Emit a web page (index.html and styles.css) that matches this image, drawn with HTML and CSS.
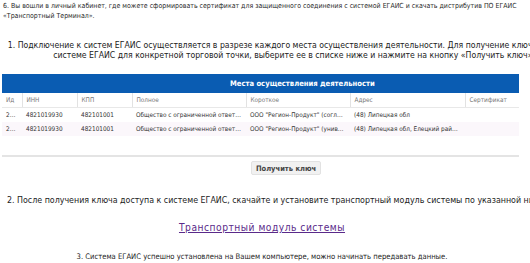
FILE: index.html
```html
<!doctype html>
<html lang="ru">
<head>
    <meta charset="UTF-8">
    <title>Подключение к ЕГАИС</title>
    <link rel="stylesheet" href="styles.css">
</head>
<body>
    <p class="intro">6. Вы вошли в личный кабинет, где можете сформировать сертификат для защищенного соединения с системой ЕГАИС и скачать дистрибутив ПО ЕГАИС «Транспортный Терминал».</p>

    <div class="wide">
        <p class="step step-one">1. Подключение к систем ЕГАИС осуществляется в разрезе каждого места осуществления деятельности. Для получение ключа доступа к<br>системе ЕГАИС для конкретной торговой точки, выберите ее в списке ниже и нажмите на кнопку «Получить ключ».</p>
    </div>

    <div class="grid">
        <div class="grid-title">Места осуществления деятельности</div>
        <table>
            <colgroup>
                <col class="c-id">
                <col class="c-inn">
                <col class="c-kpp">
                <col class="c-full">
                <col class="c-short">
                <col class="c-addr">
                <col>
            </colgroup>
            <thead>
                <tr>
                    <th>Ид</th>
                    <th>ИНН</th>
                    <th>КПП</th>
                    <th>Полное</th>
                    <th>Короткое</th>
                    <th>Адрес</th>
                    <th>Сертификат</th>
                </tr>
            </thead>
            <tbody>
                <tr>
                    <td>2143</td>
                    <td>4821019930</td>
                    <td>482101001</td>
                    <td>Общество с ограниченной ответственностью "Регион-Продукт"</td>
                    <td>ООО "Регион-Продукт" (согласие)</td>
                    <td>(48) Липецкая обл</td>
                    <td></td>
                </tr>
                <tr class="alt">
                    <td>2144</td>
                    <td>4821019930</td>
                    <td>482101001</td>
                    <td>Общество с ограниченной ответственностью "Регион-Продукт"</td>
                    <td>ООО "Регион-Продукт" (универсам)</td>
                    <td>(48) Липецкая обл, Елецкий район, г Елец</td>
                    <td></td>
                </tr>
            </tbody>
        </table>
        <div class="grid-bar"></div>
        <div class="grid-actions">
            <button type="button" class="btn">Получить ключ</button>
        </div>
    </div>

    <p class="step step-two">2. После получения ключа доступа к системе ЕГАИС, скачайте и установите транспортный модуль системы по указанной ниже ссылке.</p>
    <p class="link-row"><a href="#">Транспортный модуль системы</a></p>
    <p class="step step-three">3. Система ЕГАИС успешно установлена на Вашем компьютере, можно начинать передавать данные.</p>
</body>
</html>
```

FILE: styles.css
```css
body {
    font-family: "DejaVu Sans Condensed", "DejaVu Sans", Tahoma, sans-serif;
    color: #222;
    background: #fff;
    margin: 0;
    overflow: hidden;
}
p {
    margin: 0;
}
.intro {
    font-size: 6.95px;
    line-height: 10px;
    padding: 1px 1px 0 3px;
    color: #2a2a2a;
}
.wide {
    width: 576px;
    padding-left: 6px;
    margin-top: 19px;
}
.step {
    line-height: 10px;
    white-space: nowrap;
}
.step-one {
    font-size: 8.65px;
    text-align: center;
}
.grid {
    width: 517px;
    margin: 14px 0 0 2px;
}
.grid-title {
    background: #0a5cb2;
    color: #fff;
    font-weight: bold;
    font-size: 7.6px;
    height: 19px;
    line-height: 19px;
    padding-left: 228px;
}
table {
    width: 100%;
    border-collapse: collapse;
    table-layout: fixed;
    font-size: 6.4px;
}
.c-id { width: 20px; }
.c-inn { width: 55px; }
.c-kpp { width: 55px; }
.c-full { width: 114px; }
.c-short { width: 104px; }
.c-addr { width: 115px; }
th {
    font-weight: normal;
    color: #777;
    text-align: left;
    height: 14px;
    padding: 0 4px;
    border-left: 1px solid #e2e2e2;
    border-bottom: 1px solid #e8e8e8;
}
th:first-child {
    border-left: none;
}
td {
    color: #333;
    height: 14px;
    padding: 0 4px;
    white-space: nowrap;
    overflow: hidden;
    text-overflow: ellipsis;
}
tr.alt td {
    background: #fbf7fb;
}
.grid-bar {
    margin-top: 19px;
    height: 2px;
    background: #e4e4e4;
}
.grid-actions {
    display: flex;
    justify-content: center;
    padding: 4px 0 0 51px;
}
.btn {
    font-family: inherit;
    font-size: 7.5px;
    font-weight: bold;
    color: #444;
    background: #f1f1f1;
    border: 1px solid #e2e2e2;
    border-radius: 2px;
    padding: 0 4px;
    height: 14px;
}
.step-two {
    font-size: 8.8px;
    margin-top: 20px;
    padding-left: 7px;
}
.link-row {
    text-align: center;
    margin-top: 18px;
    margin-right: 6px;
    font-size: 10.2px;
    letter-spacing: 0.5px;
    line-height: 10px;
}
.link-row a {
    color: #5a2a8a;
}
.step-three {
    font-size: 7.6px;
    text-align: center;
    margin-top: 19px;
    margin-right: 6px;
}
```
